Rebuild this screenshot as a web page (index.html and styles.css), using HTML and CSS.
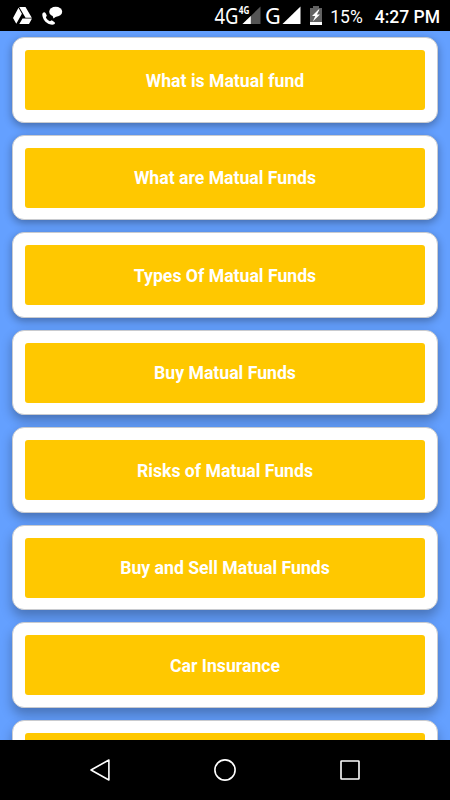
FILE: index.html
```
<!DOCTYPE html>
<html lang="en">
<head>
  <meta charset="utf-8">
  <title>Matual Funds</title>
  <link rel="stylesheet" href="styles.css">
</head>
<body>
  <div class="screen">
    <div class="status-bar">
      <!-- notifications -->
      <svg class="notifications" width="52" height="31" viewBox="0 0 52 31">
        <path fill="#fff" d="M6.2 7h6.3l6.3 10.7h-6.3z M5.5 7.8l3.4 5.9-5.6 10L0 18z M9.5 18.5H19L16 24H6.3z"/>
        <ellipse cx="42.7" cy="11.8" rx="6.5" ry="5" fill="#fff"/>
        <path fill="#fff" d="M39.5 15.5l1 3 4-3z"/>
        <path fill="#fff" d="M30 12.7c.8-.8 2-.7 2.5.3l1.3 2.6-.9 2c1 1.7 2.2 2.900 4 3.700l1.900-1 2.800 1.900c.6.500.5 1.200 0 1.700-1.200 1-3 1-4.800.4-4.200-1.400-7-4.900-7.500-9.300-.1-.9.1-1.700.7-2.300z"/>
      </svg>

      <div class="status-right">
        <svg class="signals" width="88" height="31" viewBox="0 0 88 31">
          <g class="network" fill="#fff">
            <text transform="translate(0.5 24) scale(0.82 1)" font-size="22.5">4G</text>
            <text class="network-small" transform="translate(24.8 14) scale(0.78 1)" font-size="10.5">4G</text>
            <text transform="translate(51 24) scale(0.96 1)" font-size="22.5">G</text>
          </g>
          <path fill="#555" d="M46.5 6.5V24H28.5z"/>
          <path fill="#fff" d="M36.8 16V24h-8.3z"/>
          <path fill="#fff" d="M86.5 6.5V24H68.5z"/>
        </svg>
        <svg class="battery" width="12" height="31" viewBox="0 0 12 31">
          <path fill="#626262" d="M3 6h6v2h3v14H0V8h3z"/>
          <path fill="#fff" d="M0 22h12v3H0z"/>
          <path fill="#fff" d="M8.5 9.5L2 16h3.3l-2.5 5.5L10 14.5H6.9L9.5 9.5z"/>
        </svg>
        <span class="percent">15%</span>
        <span class="clock">4:27 PM</span>
      </div>
    </div>

    <div class="content">
      <div class="card"><button type="button">What is Matual fund</button></div>
      <div class="card"><button type="button">What are Matual Funds</button></div>
      <div class="card"><button type="button">Types Of Matual Funds</button></div>
      <div class="card"><button type="button">Buy Matual Funds</button></div>
      <div class="card"><button type="button">Risks of Matual Funds</button></div>
      <div class="card"><button type="button">Buy and Sell Matual Funds</button></div>
      <div class="card"><button type="button">Car Insurance</button></div>
      <div class="card"><button type="button"></button></div>
    </div>

    <div class="nav-bar">
      <svg width="24" height="24" viewBox="0 0 24 24"><path d="M20.9 2v20L3 12z"/></svg>
      <svg width="24" height="24" viewBox="0 0 24 24"><circle cx="12" cy="12" r="10.1"/></svg>
      <svg width="24" height="24" viewBox="0 0 24 24"><rect x="3" y="3" width="18" height="18" rx="0.5"/></svg>
    </div>
  </div>
</body>
</html>
```
FILE: styles.css
```
body {
  margin: 0;
  font-family: Roboto, sans-serif;
  background-color: #000;
}

.screen {
  width: 450px;
  height: 800px;
  display: flex;
  flex-direction: column;
  overflow: hidden;
}

/* Status bar */
.status-bar {
  height: 31px;
  flex-shrink: 0;
  display: flex;
  justify-content: space-between;
  padding: 0 10px 0 13px;
  box-sizing: border-box;
  background-color: #000;
  color: #fff;
}

.status-right {
  display: flex;
}

.status-right svg {
  display: block;
}

.network {
  font-family: "Noto Sans", sans-serif;
}

.network-small {
  font-weight: bold;
}

.battery {
  margin-left: 8px;
}

.percent {
  margin-left: 8px;
  font-size: 17.5px;
  line-height: 34px;
}

.clock {
  margin-left: 12px;
  font-size: 17.5px;
  font-weight: 500;
  line-height: 34px;
}

/* List of cards */
.content {
  flex: 1;
  min-height: 0;
  display: flex;
  flex-direction: column;
  gap: 11.9px;
  padding: 6.4px 12px 0;
  overflow: hidden;
  background-color: #64a0ff;
}

.card {
  height: 85.6px;
  flex-shrink: 0;
  box-sizing: border-box;
  padding: 12px 12px 11.6px;
  border: 1px solid #c9cbcf;
  border-radius: 12px;
  background-color: #fff;
  box-shadow: 0 3px 9px rgba(0, 0, 0, 0.33);
}

/* shadows fall deeper further down the screen */
.card:nth-child(n+4) {
  box-shadow: 0 5px 11px rgba(0, 0, 0, 0.3);
}

.card:nth-child(n+6) {
  box-shadow: 0 7px 12px rgba(0, 0, 0, 0.27);
}

.card button {
  display: block;
  width: 100%;
  height: 60px;
  padding: 1.2px 0 0;
  border: none;
  border-radius: 3px;
  background-color: #ffc800;
  color: #fff;
  font-family: Roboto, sans-serif;
  font-size: 17.65px;
  font-weight: bold;
}

/* Navigation bar */
.nav-bar {
  height: 60px;
  flex-shrink: 0;
  display: flex;
  align-items: center;
  justify-content: center;
  gap: 101px;
  background-color: #000;
}

.nav-bar svg {
  fill: none;
  stroke: #fff;
  stroke-width: 1.6;
  stroke-linejoin: round;
}
```
